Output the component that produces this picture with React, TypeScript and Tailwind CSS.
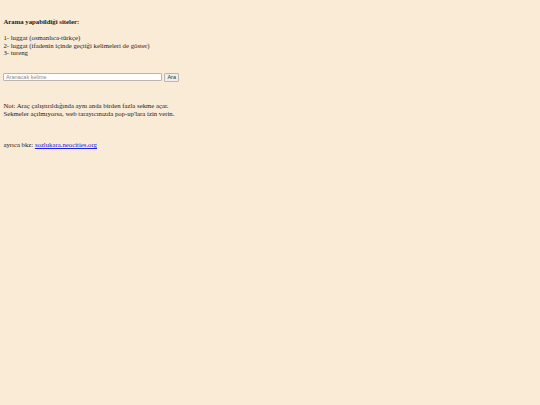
export default function App() {
  return (
    <div
      className="min-h-[405px] w-full bg-[#faebd7] px-[3.4px] pt-[18px] text-[6.75px] leading-[7.7px] text-[#1a1a1a]"
      style={{ fontFamily: '"Liberation Serif", "DejaVu Serif", serif' }}
    >
      <p className="font-bold">Arama yapabildiği siteler:</p>

      <div className="mt-[8.3px]">
        <p>1- luggat (osmanlıca-türkçe)</p>
        <p>2- luggat (ifadenin içinde geçtiği kelimeleri de göster)</p>
        <p>3- tureng</p>
      </div>

      <form
        className="mt-[15.5px] flex items-center gap-[1.5px]"
        onSubmit={(e) => e.preventDefault()}
      >
        <input
          type="text"
          placeholder="Aranacak kelime"
          className="h-[8.5px] w-[159px] rounded-[1px] border border-[#bdb6ac] bg-white px-[1.5px] text-[5.5px] leading-[7px] placeholder:text-[#8a8a8a]"
          style={{ fontFamily: '"Liberation Sans", Arial, sans-serif' }}
        />
        <button
          type="submit"
          className="h-[9px] rounded-[1px] border border-[#bdb6ac] bg-[#efeeec] px-[2.5px] text-[5.5px] leading-[7px] text-[#333]"
          style={{ fontFamily: '"Liberation Sans", Arial, sans-serif' }}
        >
          Ara
        </button>
      </form>

      <div className="mt-[20.5px]">
        <p>Not: Araç çalıştırıldığında aynı anda birden fazla sekme açar.</p>
        <p>Sekmeler açılmıyorsa, web tarayıcınızda pop-up'lara izin verin.</p>
      </div>

      <p className="mt-[23.5px]">
        ayrıca bkz:{" "}
        <a href="#" className="text-[#2020e8] underline">
          sozlukara.neocities.org
        </a>
      </p>
    </div>
  );
}
